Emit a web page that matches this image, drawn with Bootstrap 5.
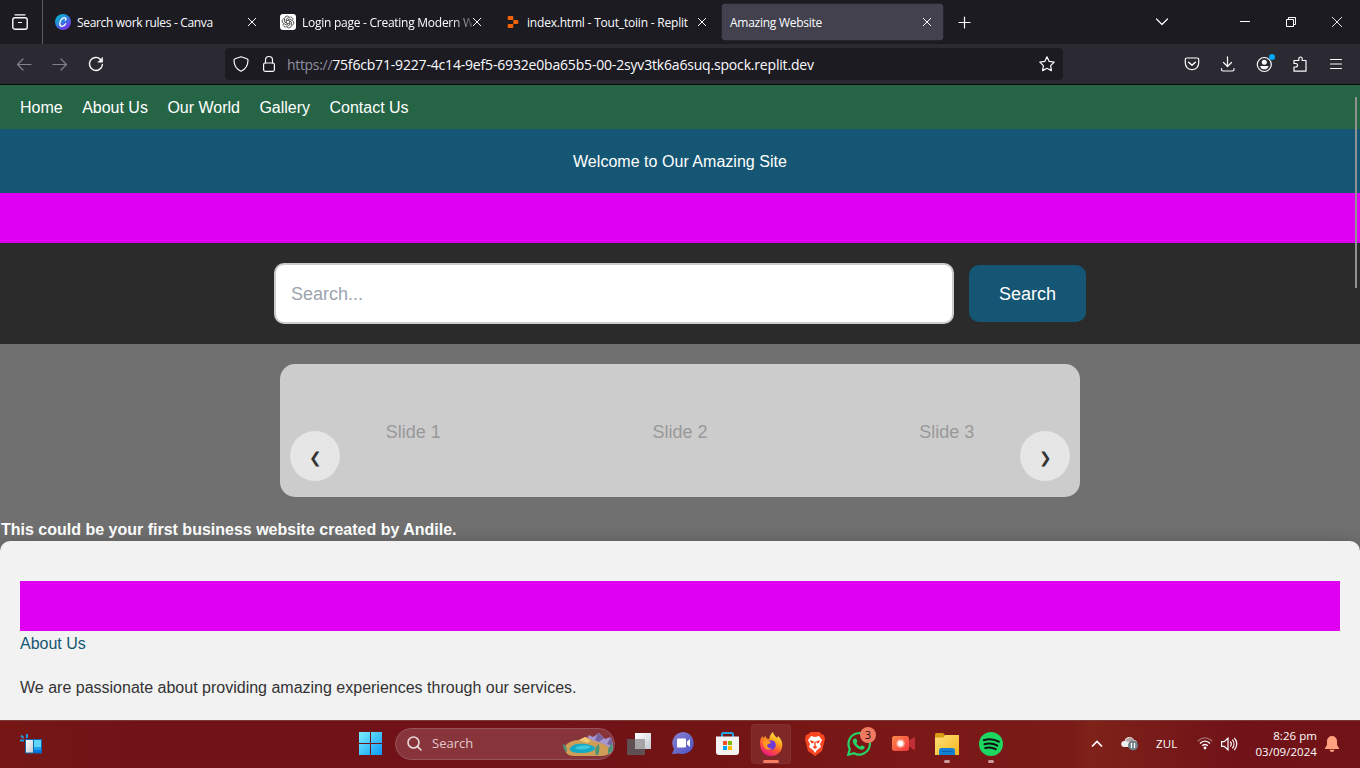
<!DOCTYPE html>
<html lang="en">
<head>
<meta charset="utf-8">
<title>Amazing Website</title>
<meta name="viewport" content="width=device-width, initial-scale=1">
<link href="https://cdn.jsdelivr.net/npm/bootstrap@5.3.0/dist/css/bootstrap.min.css" rel="stylesheet">
<style>
  html, body { height: 100%; overflow: hidden; }
  body { font-family: "Open Sans", "Noto Sans", sans-serif; font-size: 12px; }
  svg { display: block; flex: none; overflow: visible; }
  .ico { fill: none; stroke: #fbfbfe; stroke-width: 1.2; stroke-linecap: round; stroke-linejoin: round; }
  /* browser chrome */
  .tabstrip { height: 44px; background: #1c1b22; color: #fbfbfe; }
  .view-btn { width: 43px; border-right: 1px solid #5b5b66; padding-right: 3px; }
  .tabs { gap: 4px; margin-left: 4px; }
  .tab-item { width: 221px; height: 36px; border-radius: 4px; padding: 0 11px 0 8px; }
  .tab-item.current { background: #42414d; box-shadow: 0 0 1px rgba(128,128,142,.9); }
  .tab-title { flex: 1 1 0; min-width: 0; white-space: nowrap; font-size: 12px; letter-spacing: -.33px; margin-left: 6px; line-height: 18px; padding-top: 2px; }
  .tab-title.loose { letter-spacing: -.2px; }
  .tab-title.fade-end { letter-spacing: -.26px; -webkit-mask-image: linear-gradient(90deg,#000 88%,transparent 104%); mask-image: linear-gradient(90deg,#000 88%,transparent 104%); }
  .tab-title.solo { margin-left: 0; letter-spacing: -.26px; }
  .window-btns { padding-right: 18px; }
  .toolbar { height: 41px; background: #2b2a33; border-bottom: 1px solid #0c0c0d; }
  .tools-left { width: 225px; padding-left: 16px; gap: 20px; }
  .idle { opacity: .42; }
  .urlbar { width: 838px; height: 32px; border-radius: 4px; background: #1c1b22; padding: 0 8px; }
  .url { font-size: 14px; line-height: 20px; letter-spacing: -.18px; color: #fbfbfe; margin-left: 10px; padding-top: 2px; white-space: nowrap; }
  .url i { font-style: normal; color: #8f8f9d; letter-spacing: -.32px; }
  .tools-right { margin-left: auto; padding-right: 16px; gap: 20px; }
  /* site */
  .site { height: 635px; font-family: "Liberation Sans", Arial, sans-serif; font-size: 16px; line-height: 24px; background: #707070; overflow: hidden; }
  .site-nav { height: 44px; background: #256546; gap: 19.5px; padding: 2px 0 0 20px; letter-spacing: -.01px; }
  .site-nav a { color: #fff; text-decoration: none; }
  .hero { height: 64px; background: #145673; color: #fff; padding-top: 2px; letter-spacing: .03px; }
  .ad { height: 50px; background: #df00f4; }
  .search-row { height: 101px; background: #2b2b2b; gap: 15px; }
  .search-row .form-control { width: 680px; height: 61px; border: 2px solid #ccc; border-radius: 10px; padding: 2px 15px 0; font-size: 18px; background: #fff; }
  .search-row .form-control::placeholder { color: #9ca3af; opacity: 1; }
  .search-row .btn { width: 117px; height: 57px; border: 0; border-radius: 10px; background: #145673; color: #fff; font-size: 18px; padding: 2px 0 0; }
  .slider-wrap { padding: 20px 0; }
  .slider { width: 800px; height: 133px; border-radius: 15px; background: #ccc; font-size: 18px; color: #999; }
  .slide-cell { flex: 1 1 0; text-align: center; padding-top: 2px; }
  .round-btn { position: absolute; top: 67px; width: 50px; height: 50px; border: 0; border-radius: 50%; background: #e6e6e6; color: #333; font-size: 15px; line-height: 50px; padding: 2px 0 0; }
  .round-btn.prev { left: 10px; }
  .round-btn.next { right: 10px; }
  .tagline { height: 24px; padding: 1px 0 0 1px; color: #fff; font-weight: 700; }
  .about { height: 200px; background: #f2f2f2; border-radius: 10px 10px 0 0; padding: 40px 20px 0; color: #333; box-shadow: 0 0 15px rgba(0,0,0,.2); }
  .about h2 { font-size: 16px; line-height: 24px; font-weight: 400; color: #145673; margin: 0 0 20px; padding-top: 1px; }
  .scroll-thumb { position: absolute; right: 3px; top: 97px; width: 2px; height: 191px; background: #8f928f; }
  /* taskbar */
  .taskbar { height: 48px; border-top: 1px solid #7a3a38; padding-bottom: 2px; color: #fff; background: linear-gradient(90deg,#761715 0,#701218 10%,#701218 40%,#711414 50%,#7a1817 66%,#7a1b18 79%,#7f2219 80%,#701218 91%,#711417 100%); }
  .widgets { margin: 0 308px 0 20px; }
  .cell { width: 40px; height: 40px; border-radius: 4px; position: relative; }
  .cell.active { background: rgba(255,255,255,.08); box-shadow: inset 0 0 0 1px rgba(255,255,255,.04); }
  .run-mark { position: absolute; bottom: 1px; width: 6px; height: 3px; border-radius: 2px; background: #cb9b9a; }
  .active .run-mark { width: 16px; background: #f27d63; }
  .pill { width: 220px; height: 32px; border-radius: 16px; background: #87343a; border: 1px solid #97525a; margin: 0 4px 0 5px; font-size: 13px; color: #e2c9cb; padding: 0 0 0 11px; overflow: hidden; }
  .pill span { margin-left: 10px; padding-top: 1px; }
  .count { position: absolute; left: 21px; top: 3px; width: 16px; height: 16px; border-radius: 50%; background: #f17a62; color: #2a0d0b; font-size: 11px; line-height: 16px; text-align: center; }
  .apps { gap: 4px; }
  .tray { margin-left: auto; font-size: 11.5px; padding-right: 21px; }
  .lang { margin-left: 17px; width: 24px; padding-top: 1px; letter-spacing: .2px; }
  .clock { line-height: 16px; text-align: right; width: 70px; margin-left: 9px; letter-spacing: .05px; white-space: nowrap; }
</style>
</head>
<body>
<svg width="0" height="0" class="position-absolute">
  <defs>
    <linearGradient id="cv" x1="0" y1="0" x2=".7" y2="1"><stop stop-color="#00c4cc"/><stop offset=".5" stop-color="#2a85e0"/><stop offset="1" stop-color="#7d2ae8"/></linearGradient>
    <linearGradient id="win" gradientUnits="userSpaceOnUse" x1="0" y1="0" x2="23" y2="23"><stop stop-color="#7cf0ff"/><stop offset="1" stop-color="#0a98f7"/></linearGradient>
    <linearGradient id="ff" x1=".8" y1="0" x2=".3" y2="1"><stop stop-color="#fff04c"/><stop offset=".35" stop-color="#ffac1f"/><stop offset=".65" stop-color="#ff5634"/><stop offset="1" stop-color="#e8128a"/></linearGradient>
    <linearGradient id="fold" x1="0" y1="0" x2="1" y2="1"><stop stop-color="#ffe07a"/><stop offset="1" stop-color="#f4b61b"/></linearGradient>
    <linearGradient id="chat" x1="0" y1="0" x2="1" y2="1"><stop stop-color="#8a83d0"/><stop offset="1" stop-color="#4b52c4"/></linearGradient>
    <linearGradient id="cam" x1="0" y1="0" x2="1" y2="1"><stop stop-color="#ff8a4a"/><stop offset="1" stop-color="#f2363f"/></linearGradient>
    <linearGradient id="pane" x1="0" y1="0" x2="1" y2="1"><stop stop-color="#fff"/><stop offset="1" stop-color="#c4cad2"/></linearGradient>
    <symbol id="x" viewBox="0 0 10 10"><path d="M1 1l8 8M9 1L1 9" fill="none" stroke="#fbfbfe" stroke-width="1"/></symbol>
  </defs>
</svg>

<header>
  <div class="tabstrip d-flex align-items-center">
    <div class="view-btn d-flex align-items-center justify-content-center h-100">
      <svg class="ico" width="16" height="16" viewBox="0 0 16 16"><path d="M3 .8h10"/><rect x=".8" y="3.700" width="14.400" height="11.500" rx="2" stroke-width="1.400"/><path d="M6.500 8.500h3"/></svg>
    </div>
    <div class="tabs d-flex">
      <div class="tab-item d-flex align-items-center">
        <svg width="16" height="16" viewBox="0 0 16 16"><circle cx="8" cy="8" r="8" fill="url(#cv)"/><path d="M10.300 6.300c1-.7 1-2.600-.7-2.600C7.200 3.700 4.700 6.900 4.700 9.600c0 1.700.9 2.700 2.400 2.700 1.500 0 2.900-1.200 3.500-2.500" fill="none" stroke="#fff" stroke-width="1.300" stroke-linecap="round"/></svg>
        <span class="tab-title">Search work rules - Canva</span>
        <svg width="10" height="10"><use href="#x"/></svg>
      </div>
      <div class="tab-item d-flex align-items-center">
        <svg width="16" height="16" viewBox="0 0 16 16"><rect width="16" height="16" rx="3" fill="#fff"/><g fill="none" stroke="#222" stroke-width=".7"><path id="knot" d="M6.300 9V5.100L9.300 3.300c1.800-.9 4 .5 3.700 2.700"/><use href="#knot" transform="rotate(60 8 8)"/><use href="#knot" transform="rotate(120 8 8)"/><use href="#knot" transform="rotate(180 8 8)"/><use href="#knot" transform="rotate(240 8 8)"/><use href="#knot" transform="rotate(300 8 8)"/></g></svg>
        <span class="tab-title fade-end">Login page - Creating Modern W</span>
        <svg width="10" height="10"><use href="#x"/></svg>
      </div>
      <div class="tab-item d-flex align-items-center">
        <svg width="16" height="16" viewBox="0 0 16 16"><path d="M3.700 2h3.600a1 1 0 0 1 1 1v3H3.700a1 1 0 0 1-1-1V3a1 1 0 0 1 1-1zM8.300 6h4a1 1 0 0 1 1 1v2a1 1 0 0 1-1 1h-4zM3.700 10h4.600v3a1 1 0 0 1-1 1H3.700a1 1 0 0 1-1-1v-2a1 1 0 0 1 1-1z" fill="#f26207"/></svg>
        <span class="tab-title loose">index.html - Tout_toiin - Replit</span>
        <svg width="10" height="10"><use href="#x"/></svg>
      </div>
      <div class="tab-item current d-flex align-items-center">
        <span class="tab-title solo">Amazing Website</span>
        <svg width="10" height="10"><use href="#x"/></svg>
      </div>
    </div>
    <svg class="ico" width="14" height="14" style="margin-left:15px"><path d="M1 7.500h11M6.500 2v11"/></svg>
    <div class="window-btns d-flex align-items-center ms-auto">
      <svg class="ico" width="14" height="10" style="margin-right:71px"><path d="M1.500 2L7 7.500 12.500 2"/></svg>
      <svg width="10" height="10" style="margin-right:36px"><path d="M0 4.500h10" stroke="#fff"/></svg>
      <svg width="10" height="10" style="margin-right:36px" fill="none" stroke="#fff"><path d="M.5 2.500h7v7h-7zM2.500 2.500v-2h7v7h-2"/></svg>
      <svg width="10" height="10"><path d="M0 0l10 10M10 0L0 10" stroke="#fff" stroke-width=".9"/></svg>
    </div>
  </div>
  <div class="toolbar d-flex align-items-center">
    <div class="tools-left d-flex">
      <svg class="ico idle" width="16" height="16"><path d="M15 8.500H1.500M7 3L1.500 8.500 7 14"/></svg>
      <svg class="ico idle" width="16" height="16"><path d="M1 8.500h13.500M9 3l5.500 5.500L9 14"/></svg>
      <svg class="ico" width="16" height="16"><path d="M14.400 8.500A6.500 6.500 0 1 1 12.600 3.400" stroke-width="1.400"/><path d="M14.600 1.500v4.700H10z" fill="#fbfbfe" stroke-width=".5"/></svg>
    </div>
    <div class="urlbar d-flex align-items-center">
      <svg class="ico" width="16" height="16"><path d="M8 .8l6 2c.7.200 1 .6 1 1.200 0 5-1.500 8.800-7 11.300C2.500 12.800 1 9 1 4c0-.6.300-1 1-1.200z"/></svg>
      <svg class="ico" width="16" height="16" style="margin-left:12px"><rect x="2.600" y="7" width="10.800" height="8.300" rx="1.500"/><path d="M4.500 7V4a3.500 3.500 0 0 1 7 0v3"/></svg>
      <span class="url"><i>https://</i>75f6cb71-9227-4c14-9ef5-6932e0ba65b5-00-2syv3tk6a6suq.spock.replit.dev</span>
      <svg class="ico ms-auto" width="16" height="16"><path d="M8 .8l2.200 4.600 5 .7-3.600 3.500.8 5L8 12.300l-4.400 2.300.8-5L.8 6.100l5-.7z"/></svg>
    </div>
    <div class="tools-right d-flex">
      <svg class="ico" width="16" height="16"><path d="M2.700 2h10.600c.8 0 1.400.5 1.400 1.300V7c0 4-3 6.700-6.700 6.700S1.300 11 1.300 7V3.300C1.300 2.500 1.900 2 2.700 2z"/><path d="M4.700 6.200L8 9.300l3.300-3.100" stroke-width="1.500"/></svg>
      <svg class="ico" width="16" height="16"><path d="M7.500.8v9.500M3.500 6.500l4 4 4-4M1.500 12.500v1c0 1 .5 1.500 1.500 1.500h9.500c1 0 1.500-.5 1.500-1.500v-1"/></svg>
      <svg class="ico" width="16" height="16"><circle cx="8.300" cy="8.500" r="7"/><circle cx="8.300" cy="6.300" r="2.500" fill="#fbfbfe" stroke="none"/><path d="M4 9.900h8.600c-.4 1.900-2 3.400-4.300 3.400S4.400 11.800 4 9.900z" fill="#fbfbfe" stroke="none"/><circle cx="16" cy="1" r="3" fill="#00a8f5" stroke="none"/></svg>
      <svg class="ico" width="16" height="16"><path d="M2 15.200V11h1.800a1.700 1.700 0 0 0 0-3.500H2V4.500h4.800V2.700a1.700 1.700 0 0 1 3.400 0v1.800h3.800v10.700z"/></svg>
      <svg class="ico" width="16" height="16"><path d="M2.500 3.500h11M2.500 8h11M2.500 12.500h11"/></svg>
    </div>
  </div>
</header>

<main class="site">
  <nav class="site-nav d-flex align-items-center"><a href="#">Home</a><a href="#">About Us</a><a href="#">Our World</a><a href="#">Gallery</a><a href="#">Contact Us</a></nav>
  <div class="hero d-flex align-items-center justify-content-center">Welcome to Our Amazing Site</div>
  <div class="ad"></div>
  <form class="search-row d-flex align-items-center justify-content-center">
    <input type="text" class="form-control" placeholder="Search..."><button type="button" class="btn">Search</button>
  </form>
  <div class="slider-wrap">
    <div class="slider position-relative d-flex align-items-center mx-auto">
      <div class="slide-cell">Slide 1</div><div class="slide-cell">Slide 2</div><div class="slide-cell">Slide 3</div>
      <button class="round-btn prev">❮</button>
      <button class="round-btn next">❯</button>
    </div>
  </div>
  <div class="tagline">This could be your first business website created by Andile.</div>
  <section class="about position-relative">
    <div class="ad"></div>
    <h2>About Us</h2>
    <p class="mb-0">We are passionate about providing amazing experiences through our services.</p>
  </section>
</main>
<div class="scroll-thumb"></div>

<footer class="taskbar d-flex align-items-center position-relative">
  <svg class="widgets" width="22" height="20" viewBox="0 0 22 20"><path d="M1 1.500l2.500 2.500M7 0v4M0 6.500h4" stroke="#2497dc" stroke-width="2"/><rect x="5" y="5" width="17" height="14.500" fill="#1267ad"/><rect x="6" y="6" width="7" height="12.500" fill="url(#pane)"/><rect x="14" y="6" width="7" height="7" fill="#62d5fa"/><rect x="14" y="13" width="7" height="3" fill="#1ba3ef"/><rect x="14" y="16" width="7" height="2.500" fill="#0078e8"/></svg>
  <div class="cell d-flex align-items-center justify-content-center">
    <svg width="23" height="23" viewBox="0 0 23 23"><path d="M0 0h11v11H0zM12 0h11v11H12zM0 12h11v11H0zM12 12h11v11H12z" fill="url(#win)"/></svg>
  </div>
  <div class="pill d-flex align-items-center">
    <svg width="15" height="15" fill="none" stroke="#eadadb" stroke-width="1.600" stroke-linecap="round"><circle cx="6.500" cy="6.500" r="5.500"/><path d="M10.600 10.600L14 14"/></svg>
    <span>Search</span>
    <svg width="52" height="28" viewBox="0 0 52 28" class="ms-auto"><path d="M22 14l5-9 4 2 6-4 6 6 6-2 2 7v10H22z" fill="#a796cf"/><path d="M36 3l-3 7 4 2 5-4zM49 7l-4 7 6 2z" fill="#75639f"/><path d="M3 18c0-5 8-8 14-8l7-3 8 4 10 3 7 5c2 4-4 7-10 7H12c-6 0-9-3-9-8z" fill="#cf9d56"/><path d="M8 18c2-4 9-5 16-4 6 1 10 3 9 5s-7 4-14 4-12-1-11-5z" fill="#16a9c4"/><path d="M13 18c4-3 12-3 16-1-3 2-11 4-16 1z" fill="#3fc9dc"/><path d="M17 10l6-3 6 4-4 2z" fill="#f2c875"/><path d="M1 14c3 1 4 4 4 8-3-1-4-5-4-8zM34 25c-2-5 0-9 3-11 1 5 0 9-1 11zM46 19l4-6 1 8-5 3z" fill="#4d9475"/></svg>
  </div>
  <div class="apps d-flex">
    <div class="cell d-flex align-items-center justify-content-center"><svg width="24" height="22"><rect x="8" width="16" height="16" fill="url(#pane)"/><rect y="6" width="18" height="16" fill="#5c5558" opacity=".93"/><rect x="8" y="6" width="10" height="10" fill="#a6a4a6"/></svg></div>
    <div class="cell d-flex align-items-center justify-content-center"><svg width="23" height="23"><path d="M11.500 0a11 11 0 1 1-4 21.500L0 22l2-5A11.200 11.200 0 0 1 11.500 0z" fill="url(#chat)"/><rect x="5" y="6.500" width="9" height="9" rx="1" fill="#fff"/><path d="M15 9.500l3-2.500v8l-3-2.500z" fill="#fff"/></svg></div>
    <div class="cell d-flex align-items-center justify-content-center"><svg width="23" height="23"><path d="M6 6V2.500C6 1.500 6.500 1 7.500 1h8c1 0 1.500.5 1.500 1.500V6" fill="none" stroke="#23a6e8" stroke-width="2"/><path d="M0 4.500h23V20q0 3-3 3H3q-3 0-3-3z" fill="#f3f3f4"/><path d="M7 9h4v4H7z" fill="#f25022"/><path d="M12 9h4v4h-4z" fill="#7fba00"/><path d="M7 14h4v4H7z" fill="#00a4ef"/><path d="M12 14h4v4h-4z" fill="#ffb900"/></svg></div>
    <div class="cell active d-flex align-items-center justify-content-center"><svg width="24" height="24"><path d="M1 11C1 8 2 5.500 3.500 4l.5 2.500L6.500 4l1 2.500c1 0 2 .3 2.700.8C10.500 4 12 1.500 14 0c.5 3 2.500 4 4 6l1-2c3 3 4.500 6 4.300 9.500C23 19.500 18.200 24 12 24S1 19 1 11z" fill="url(#ff)"/><circle cx="12" cy="13" r="4.800" fill="#7139d6"/><path d="M4 9c3-1.500 5 0 8 1-1 2-3 2-3.500 2.500C7.500 14 9 17 12.500 16c-1.500 2.500-6 2-7.500-1S3.500 10.500 4 9z" fill="#ff9822"/></svg><span class="run-mark"></span></div>
    <div class="cell d-flex align-items-center justify-content-center"><svg width="20" height="24"><path d="M5.500 0h9L17 2.500l2 .5 1 4-3 12-7 5-7-5L0 7l1-4 2-.5z" fill="#fa4521"/><path d="M6 4l4 1 4-1 3 4-2 4 1 3-4 3-2 3-2-3-4-3 1-3-2-4z" fill="#fff"/><path d="M5 8l4 1.500-1 2-2-.500zM15 8l-4 1.500 1 2 2-.500zM7.500 15l2.500-1.500 2.500 1.500-2.500 2zM9.300 9.500h1.400V14H9.300z" fill="#fa4521"/></svg></div>
    <div class="cell d-flex align-items-center justify-content-center"><svg width="24" height="24"><path d="M1.300 22.700l1.500-5.700A10.700 10.700 0 1 1 7 21.200z" fill="none" stroke="#25d366" stroke-width="2.200"/><path d="M7.500 6.500h1.700l1.300 3.200-1.200 1.400c1 1.800 2.200 2.800 4 3.600l1.500-1.500 3 1.500c0 2-1.500 3-3 3-4-.3-9-5.200-9-8.700 0-1 .7-2 1.700-2.500z" fill="#25d366"/></svg><span class="count">3</span></div>
    <div class="cell d-flex align-items-center justify-content-center"><svg width="23" height="15"><path d="M15 6l7-5q1 0 1 1v11q0 1-1 1l-7-5z" fill="#c22e36"/><rect width="17" height="15" rx="2.500" fill="url(#cam)"/><circle cx="8.500" cy="7.500" r="4.300" fill="#fda897"/><circle cx="8.500" cy="7.500" r="2.700" fill="#fff"/></svg></div>
    <div class="cell d-flex align-items-center justify-content-center"><svg width="24" height="22"><path d="M0 1.500Q0 0 1.500 0H8l2.500 2.500L8 5H0z" fill="#d99b13"/><path d="M0 4.500h8l2.500-2.500H24v20H0z" fill="url(#fold)"/><path d="M4 22v-4.500q0-2.500 2.500-2.500h11q2.500 0 2.500 2.500V22z" fill="#1380d4"/><path d="M6.500 18.500h11" stroke="#0b5fae"/></svg><span class="run-mark"></span></div>
    <div class="cell d-flex align-items-center justify-content-center"><svg width="24" height="24"><circle cx="12" cy="12" r="12" fill="#1ed760"/><path d="M4.800 8.200c5-1.500 10.500-1 15 1.500M5.500 12.200c4.500-1.200 9-.7 12.800 1.400M6.200 16c3.800-.9 7.200-.6 10.500 1.200" fill="none" stroke="#111" stroke-width="2" stroke-linecap="round"/></svg><span class="run-mark"></span></div>
  </div>
  <div class="tray d-flex align-items-center">
    <svg width="12" height="8" fill="none" stroke="#fff" stroke-width="1.700"><path d="M1 6.500l5-5 5 5"/></svg>
    <svg width="18" height="15" style="margin-left:18px"><path d="M3 11a3 3 0 0 1 .5-6A5 5 0 0 1 13 4c2 0 3 1.500 3 3.500L13 11z" fill="#eee"/><path d="M4 5a5 5 0 0 1 9-1L9 6z" fill="#b9a5a6"/><circle cx="12" cy="9.500" r="5" fill="#708086"/><path d="M10.500 7v5M13.500 7v5" stroke="#fff" stroke-width="1.300"/></svg>
    <span class="lang">ZUL</span>
    <svg width="16" height="13" fill="none" stroke="#fff" stroke-width="1.400" style="margin-left:17px"><path d="M.8 4.200C5-.2 11-.2 15.200 4.200" opacity=".35"/><path d="M3 6.500C6 3.300 10 3.300 13 6.500M5.200 8.800c1.700-1.800 3.900-1.800 5.600 0"/><circle cx="8" cy="11" r="1.400" fill="#fff" stroke="none"/></svg>
    <svg width="17" height="14" fill="none" stroke="#fff" stroke-width="1.200" style="margin-left:8px"><path d="M.6 4.700h2.600L7 1.200v11.600L3.200 9.300H.6zM9.200 4.500c1.300 1.400 1.300 3.600 0 5M11.300 2.700c2.300 2.500 2.300 6.100 0 8.600M13.300 1c3.300 3.500 3.300 8.500 0 12"/></svg>
    <div class="clock">8:26 pm<br>03/09/2024</div>
    <svg width="14" height="16" style="margin-left:8px"><path d="M7 0a5 5 0 0 1 5 5v4l2 3v1H0v-1l2-3V5a5 5 0 0 1 5-5zM4.500 13.700h5Q9 16 7 16t-2.500-2.300z" fill="#ffa07f"/></svg>
  </div>
</footer>
<script src="https://cdn.jsdelivr.net/npm/bootstrap@5.3.0/dist/js/bootstrap.bundle.min.js"></script>
</body>
</html>
